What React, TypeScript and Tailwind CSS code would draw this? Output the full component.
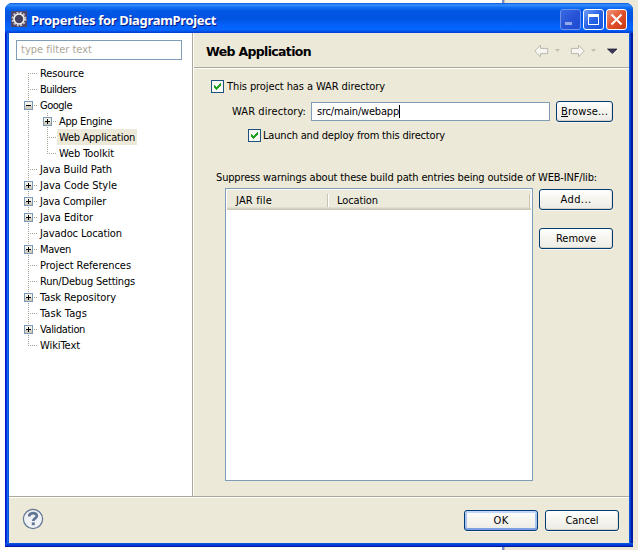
import { useLayoutEffect, useRef, useState, type ReactNode } from "react";

/** A single line of text tracked so that it spans `w` pixels. */
function Label({ text, w, className = "", accel = false }: { text: string; w: number; className?: string; accel?: boolean }) {
  const ref = useRef<HTMLSpanElement>(null);
  const [spacing, setSpacing] = useState(0);
  useLayoutEffect(() => {
    const el = ref.current;
    if (!el) return;
    const natural = el.getBoundingClientRect().width - spacing * text.length;
    setSpacing((w - natural) / text.length);
  }, [text, w]);
  return (
    <span ref={ref} className={`inline-block shrink-0 whitespace-nowrap ${className}`} style={{ letterSpacing: spacing }}>
      {accel ? (
        <>
          <span className="underline underline-offset-1">{text[0]}</span>
          {text.slice(1)}
        </>
      ) : (
        text
      )}
    </span>
  );
}

type Item = { text: string; w: number; expand?: "+" | "-"; child?: boolean; selected?: boolean; lastChild?: boolean };

const items: Item[] = [
  { text: "Resource", w: 45 },
  { text: "Builders", w: 37 },
  { text: "Google", w: 33, expand: "-" },
  { text: "App Engine", w: 54, expand: "+", child: true },
  { text: "Web Application", w: 77, child: true, selected: true },
  { text: "Web Toolkit", w: 56, child: true, lastChild: true },
  { text: "Java Build Path", w: 73 },
  { text: "Java Code Style", w: 78 },
  { text: "Java Compiler", w: 67 },
  { text: "Java Editor", w: 54 },
  { text: "Javadoc Location", w: 83 },
  { text: "Maven", w: 32 },
  { text: "Project References", w: 92 },
  { text: "Run/Debug Settings", w: 96 },
  { text: "Task Repository", w: 77 },
  { text: "Task Tags", w: 48 },
  { text: "Validation", w: 46 },
  { text: "WikiText", w: 41 },
];
const expandable = ["Java Code Style", "Java Compiler", "Java Editor", "Maven", "Task Repository", "Validation"];

function Branch({ sign, first, last }: { sign?: "+" | "-"; first?: boolean; last?: boolean }) {
  return (
    <svg width="16" height="16" className="shrink-0" shapeRendering="crispEdges">
      <line x1="4.5" x2="4.5" y1={first ? 8 : 0} y2={last ? 9 : 16} stroke="#a5a293" strokeDasharray="1 1" />
      <line x1="4" x2="14" y1="8.5" y2="8.5" stroke="#a5a293" strokeDasharray="1 1" />
      {sign && (
        <>
          <rect x="0.5" y="4.5" width="8" height="8" fill="#f3f1ea" stroke="#7898b5" />
          <rect x="1" y="9" width="7" height="3" fill="#d3cec1" />
          <rect x="2" y="8" width="5" height="1" fill="#000" />
          {sign === "+" && <rect x="4" y="6" width="1" height="5" fill="#000" />}
        </>
      )}
    </svg>
  );
}

function TreeRow({ item, first, last }: { item: Item; first: boolean; last: boolean }) {
  const sign = item.expand ?? (expandable.includes(item.text) ? "+" : undefined);
  return (
    <div className="flex h-4 items-center pl-[15px]">
      {item.child ? (
        <>
          <svg width="19" height="16" className="shrink-0" shapeRendering="crispEdges">
            <line x1="4.5" x2="4.5" y1="0" y2="16" stroke="#a5a293" strokeDasharray="1 1" />
          </svg>
          <Branch sign={sign} last={item.lastChild} />
        </>
      ) : (
        <Branch sign={sign} first={first} last={last} />
      )}
      <span className={`-ml-[2px] flex h-4 items-center ${item.selected ? "bg-[#ece9d8] pr-[2px]" : ""}`}>
        <Label text={item.text} w={item.w + 1} className="mt-[2px] pl-[2px]" />
      </span>
    </div>
  );
}

function Check() {
  return (
    <svg width="13" height="13" className="shrink-0" shapeRendering="crispEdges">
      <rect x="0.5" y="0.5" width="12" height="12" fill="#f7f7f4" stroke="#1c5180" />
      <path d="M3 5h1v1h1v1h1v-1h1v-1h1v-1h1v-1h1v3h-1v1h-1v1h-1v1h-1v1h-1v-1h-1v-1h-1z" fill="#21a121" />
    </svg>
  );
}

function Button({ children, className = "", focus = false }: { children: ReactNode; className?: string; focus?: boolean }) {
  return (
    <button
      className={`flex h-[21px] shrink-0 items-center justify-center rounded-[3px] border border-[#003c74] bg-linear-to-b from-white via-[#f5f4ee] to-[#ecebe5] ${
        focus
          ? "shadow-[inset_0_2px_0_#c2d7fb,inset_0_-2px_0_#7d9fe3,inset_2px_0_0_#a9c3f1,inset_-2px_0_0_#a9c3f1,0_1px_0_#f7f5ec]"
          : "shadow-[inset_0_-1px_0_#d6d0c5,inset_-1px_0_0_#e6e2d8,0_1px_0_#f7f5ec]"
      } ${className}`}
    >
      {children}
    </button>
  );
}

function Caption({ kind }: { kind: "min" | "max" | "close" }) {
  const tone =
    kind === "close"
      ? "border-white bg-linear-to-br from-[#ed9278] via-[#e2512b] to-[#c53a10]"
      : kind === "max"
        ? "border-white bg-linear-to-br from-[#719bf5] via-[#2862e4] to-[#1755de]"
        : "border-[#6f92ec] bg-linear-to-br from-[#396be2] via-[#2853d7] to-[#1d4bd3]";
  return (
    <div className={`size-[21px] rounded-[3px] border ${tone}`}>
      <svg width="19" height="19" className="block">
        {kind === "min" && <rect x="4" y="12" width="7" height="3" fill="#92a9ea" />}
        {kind === "max" && (
          <g fill="#fff" shapeRendering="crispEdges">
            <path fillRule="evenodd" d="M4 4h11v11H4zM5 7v7h9V7z" />
          </g>
        )}
        {kind === "close" && <path d="M4.5 4.5l10 10M14.5 4.5l-10 10" stroke="#fff" strokeWidth="2" />}
      </svg>
    </div>
  );
}

function EclipseIcon() {
  return (
    <svg width="16" height="16" className="mt-[2px] shrink-0">
      <rect width="16" height="16" fill="#51476a" />
      <circle cx="8" cy="8" r="6.4" fill="none" stroke="#c9c7c5" strokeWidth="2" strokeDasharray="2 1.35" />
      <circle cx="8" cy="8" r="5" fill="#46415e" stroke="#f1f1ee" strokeWidth="1.6" />
    </svg>
  );
}

function NavIcons() {
  return (
    <svg width="86" height="16" className="shrink-0">
      <g fill="#f7f6f1" stroke="#b9b7ae">
        <path d="M.7 8 6.5 2.2v3.2h7.2v5.2H6.5v3.2z" strokeLinejoin="round" />
        <path d="M50.3 8 44.5 2.2v3.2h-7.2v5.2h7.2v3.2z" strokeLinejoin="round" />
      </g>
      <path d="M21 6h5l-2.5 3zM57 6h5l-2.5 3z" fill="#c0beb6" />
      <path d="M73.5 6h9.5l-4.7 4.6z" fill="#38375d" stroke="#16152c" strokeWidth=".7" />
    </svg>
  );
}

export default function App() {
  return (
    <div className="h-[550px] w-[638px] overflow-hidden bg-[linear-gradient(90deg,#fff_0_502px,#7588cc_502px_504px,#c4beb1_504px_505px,#ece9d8_505px)] pt-[3px] pl-[5px] font-['DejaVu_Sans_Condensed','DejaVu_Sans',sans-serif] text-[11px] leading-4 text-black [font-stretch:condensed]">
      <div className="flex h-[544px] w-[628px] flex-col overflow-hidden rounded-t-[7px] bg-[linear-gradient(90deg,#0019cf_0_1px,#0831d9_1px_2px,#166aee_2px_3px,#0855dd_3px_624px,#0855dd_624px_625px,#0441d8_625px_626px,#001da0_626px)]">
        <header className="flex h-[30px] shrink-0 items-center bg-[linear-gradient(180deg,#0958d8_0,#3b92ff_2px,#1272f5_4px,#0457e3_8px,#0053e1_16px,#0461fa_22px,#0466ff_27px,#0146d8_29px,#003dd7_30px)] pr-[6px] pl-[6px]">
          <EclipseIcon />
          <Label
            text="Properties for DiagramProject"
            w={185}
            className="mt-[3px] ml-[4px] font-['Noto_Sans','Open_Sans',sans-serif] text-[13px] font-bold text-white [text-shadow:1px_1px_#0a1883] [font-stretch:normal]"
          />
          <div className="mt-[3px] ml-auto flex gap-[2px]">
            <Caption kind="min" />
            <Caption kind="max" />
            <Caption kind="close" />
          </div>
        </header>

        <div className="mx-1 flex h-[510px] shrink-0 flex-col bg-[linear-gradient(#ece9d8,#ece9d8_506px,#ece9d8)]">
          <div className="flex h-[463px]">
            <aside className="w-[184px] shrink-0 border-r border-[#aca899] bg-white pt-[7px]">
              <div className="ml-[7px] flex h-5 w-[166px] items-center border border-[#7f9db9] pl-[4px] text-[#aca899]">
                <Label text="type filter text" w={71} />
              </div>
              <div className="mt-[5px]">
                {items.map((item, i) => (
                  <TreeRow key={item.text} item={item} first={i === 0} last={i === items.length - 1} />
                ))}
              </div>
            </aside>

            <main className="min-w-0 grow border-l border-white">
              <div className="flex h-[35px] items-center border-b border-[#aca899] pl-[12px]">
                <Label text="Web Application" w={105} className="mt-[3px] font-['DejaVu_Sans',sans-serif] text-[12.5px] font-bold [font-stretch:normal]" />
                <span className="mt-[2px] mr-[9px] ml-auto flex">
                  <NavIcons />
                </span>
              </div>
              <div className="border-t border-white pt-[11px] pl-[17px]">
                <label className="flex h-[13px] items-center gap-[3px]">
                  <Check />
                  <Label text="This project has a WAR directory" w={158} className="mt-px" />
                </label>
                <div className="mt-2 ml-[21px] flex h-[21px] items-center">
                  <Label text="WAR directory:" w={74} className="mt-px" />
                  <div className="ml-[5px] flex h-[19px] w-[239px] items-center border border-[#7f9db9] bg-white pl-[5px]">
                    <Label text="src/main/webapp" w={82} className="mt-px" />
                    <span className="h-[13px] w-px bg-black" />
                  </div>
                  <Button className="ml-[6px] w-[57px]">
                    <Label text="Browse..." w={47} accel className="mt-px" />
                  </Button>
                </div>
                <label className="mt-[7px] ml-[37px] flex h-[13px] items-center gap-[2px]">
                  <Check />
                  <Label text="Launch and deploy from this directory" w={182} className="mt-px" />
                </label>
                <div className="mt-[28px] ml-[5px] flex h-4 items-center">
                  <Label text="Suppress warnings about these build path entries being outside of WEB-INF/lib:" w={381} />
                </div>
                <div className="mt-[2px] ml-[14px] flex items-start">
                  <div className="h-[293px] w-[308px] border border-[#7f9db9] bg-white p-px">
                    <div className="flex h-5 items-center bg-[#ebeadb] shadow-[inset_0_-1px_0_#cbc7b8,inset_0_-2px_0_#d6d2c2,inset_0_-3px_0_#e2decd]">
                      <div className="flex h-[13px] w-[101px] items-center border-r border-[#c7c5b2] pl-[9px]">
                        <Label text="JAR file" w={36} className="mt-px" />
                      </div>
                      <div className="flex h-[13px] w-[202px] items-center border-r border-l border-l-white border-r-[#c7c5b2] pl-[8px]">
                        <Label text="Location" w={41} className="mt-px" />
                      </div>
                      <div className="h-[13px] w-px bg-white" />
                    </div>
                  </div>
                  <div className="mt-px ml-[6px] flex flex-col gap-[18px]">
                    <Button className="w-[74px]">
                      <Label text="Add..." w={31} className="mt-px" />
                    </Button>
                    <Button className="w-[74px]">
                      <Label text="Remove" w={40} className="mt-px" />
                    </Button>
                  </div>
                </div>
              </div>
            </main>
          </div>

          <footer className="flex grow items-start border-t border-[#aca899] shadow-[inset_0_1px_0_#fff]">
            <svg width="22" height="22" className="mt-[11px] ml-[13px] shrink-0">
              <circle cx="11" cy="11" r="9.6" fill="#f0f1f4" stroke="#607795" strokeWidth="1.2" />
              <path d="M7.2 8.6c0-4.6 7.6-4.6 7.6-.6 0 2.5-3.5 2.3-3.5 5" fill="none" stroke="#607795" strokeWidth="2.8" />
              <rect x="9.8" y="14.4" width="3" height="2.8" fill="#607795" />
            </svg>
            <div className="mt-[13px] mr-[10px] ml-auto flex gap-[7px]">
              <Button className="w-[74px]" focus>
                <Label text="OK" w={15} className="mt-px" />
              </Button>
              <Button className="w-[74px]">
                <Label text="Cancel" w={33} className="mt-px" />
              </Button>
            </div>
          </footer>
        </div>
        <div className="h-1 shrink-0 bg-[linear-gradient(180deg,#0855dd_0_1px,#0441d8_1px_2px,#0831d9_2px_3px,#001da0_3px)]" />
      </div>
    </div>
  );
}
